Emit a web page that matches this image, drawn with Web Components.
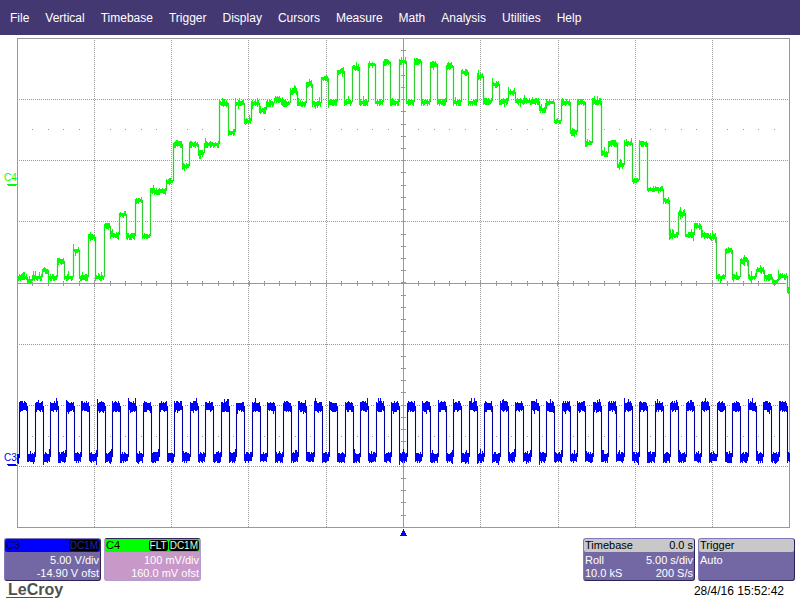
<!DOCTYPE html>
<html lang="en">
<head>
<meta charset="utf-8">
<title>LeCroy</title>
<style>
  body {
    margin: 0;
    background: #fff;
    font-family: "Liberation Sans", Arial, sans-serif;
    font-size: 11px;
  }
</style>
</head>
<body>
<scope-screen></scope-screen>

<script>
class ScopeMenu extends HTMLElement {
  constructor () {
    super()
    this.shadow = this.attachShadow({ mode: 'open' })
  }

  connectedCallback () {
    const items = this.getAttribute('items').split(',')
    this.shadow.innerHTML =
      /* html */`
      <style>
        :host {
          display: block;
          background: #443872;
        }
        nav {
          display: flex;
          gap: 16px;
          height: 35px;
          padding: 0 10px;
          align-items: center;
        }
        button {
          padding: 0;
          border: none;
          background: none;
          color: #fff;
          font: inherit;
          font-size: 12px;
          line-height: 16px;
        }
      </style>
      <nav>${items.map(item => `<button type="button">${item}</button>`).join('')}</nav>
      `
  }
}

class ScopePlot extends HTMLElement {
  constructor () {
    super()
    this.shadow = this.attachShadow({ mode: 'open' })
    this.seed = 7
  }

  connectedCallback () {
    this.render()
  }

  random () {
    this.seed = (this.seed * 16807) % 2147483647
    return this.seed / 2147483647
  }

  grid () {
    const xs = [94, 171, 248, 326, 480, 558, 635, 712]
    const ys = [99, 160, 221, 344, 405, 466]
    let dotted = ''
    let ticks = ''
    let dots = ''
    xs.forEach(x => {
      for (let y = 40; y < 527; y += 2) dotted += `M${x} ${y}h1v1h-1z`
    })
    ys.forEach(y => {
      for (let x = 19; x < 789; x += 2) dotted += `M${x} ${y}h1v1h-1z`
    })
    for (let i = 1; i < 50; i++) {
      const x = 17 + Math.round(i * 15.44)
      ticks += `M${x} 281h1v5h-1z`
      if (i % 5) dots += `M${x} 129h1v1h-1zM${x} 436h1v1h-1z`
    }
    for (let i = 1; i < 40; i++) {
      ticks += `M401 ${38 + Math.round(i * 12.22)}h5v1h-5z`
    }
    return `
      <path class="marks" d="${dotted}"/>
      <path class="marks" d="${ticks}${dots}"/>
      <path class="marks" d="M17 38h773v1h-773zM17 527h773v1h-773zM17 38h1v490h-1zM789 38h1v490h-1zM403 38h1v490h-1zM17 283h773v1h-773z"/>`
  }

  // steps: list of [x, y], each level holds until the next x
  trace (name, steps, end, half) {
    let band = ''
    let edges = ''
    steps.forEach(([x, y], i) => {
      const next = i + 1 < steps.length ? steps[i + 1][0] : end
      for (let c = x; c < next; c++) {
        const up = this.random() > 0.9 ? 3 : 0
        const down = this.random() > 0.94 ? 2 : 0
        const top = y - half - Math.floor(this.random() * 3) - up
        const bottom = y + half + 1 + Math.floor(this.random() * 3) + down
        band += `M${c} ${top}h1V${bottom}h-1z`
      }
      if (i) {
        const from = steps[i - 1][1]
        edges += `M${x} ${from}h1V${y}h-1z`
      }
    })
    return `<g class="${name}"><path class="halo" d="${edges}"/><path class="edge" d="${edges}"/><path d="${band}"/></g>`
  }

  channel4 () {
    const steps = [
      [17, 277], [27, 281], [32, 277], [42, 270], [48, 277], [57, 261], [64, 277], [73, 250],
      [79, 277], [88, 237], [95, 277], [104, 226], [110, 235], [119, 214], [126, 236], [135, 200],
      [142, 236], [150, 191], [166, 181], [173, 144], [182, 166], [189, 144], [198, 153], [204, 144],
      [219, 103], [228, 132], [235, 103], [244, 121], [251, 103], [259, 110], [266, 103], [274, 99],
      [281, 103], [290, 91], [297, 103], [306, 84], [312, 103], [321, 78], [328, 102], [337, 71],
      [344, 102], [352, 67], [359, 102], [368, 64], [375, 102], [383, 62], [390, 102], [399, 61],
      [406, 102], [414, 61], [421, 102], [430, 64], [437, 102], [446, 66], [453, 102], [461, 72],
      [468, 102], [477, 76], [483, 101], [492, 84], [499, 101], [508, 92], [515, 101], [539, 109],
      [546, 102], [554, 121], [561, 102], [570, 132], [577, 102], [585, 143], [592, 101], [601, 153],
      [608, 143], [617, 165], [624, 143], [632, 180], [639, 143], [647, 189], [663, 200], [669, 235],
      [678, 213], [685, 235], [694, 226], [701, 235], [709, 237], [716, 277], [725, 250], [732, 277],
      [740, 260], [748, 277], [756, 270], [764, 277], [772, 281], [778, 276], [787, 290]
    ]
    return this.trace('c4', steps, 790, 1)
  }

  channel3 () {
    const steps = [[17, 458]]
    for (let i = 0; i < 50; i++) {
      const x = 19 + Math.round(i * 15.5)
      steps.push([x, 406], [Math.min(x + 8, 788), 457])
    }
    return this.trace('c3', steps, 790, 3)
  }

  render () {
    this.shadow.innerHTML =
      /* html */`
      <style>
        :host { display: block; }
        svg {
          display: block;
          width: 100%;
          height: auto;
        }
        path { shape-rendering: crispEdges; }
        .marks { fill: #999; }
        .halo { fill: none; stroke-width: 2px; }
        .c4 { fill: #0f0; }
        .c4 .halo { stroke: #e0ffe0; }
        .c4 .edge { fill: #3c3; }
        .c3 { fill: #00f; }
        .c3 .halo { stroke: #f6f6ff; }
        .c3 .edge { fill: #00009c; }
        text { font-size: 10px; }
      </style>
      <svg viewBox="0 35 800 503" role="img" aria-label="Waveforms C3 and C4">
        ${this.grid()}
        ${this.channel4()}
        ${this.channel3()}
        <g fill="#0f0">
          <text x="4" y="181">C4</text>
          <path d="M7 184h10v1h-10zM8 185h8v1h-8z"/>
          <path d="M17 277h1v14h-1z"/>
        </g>
        <g fill="#00f">
          <text x="4" y="461">C3</text>
          <path d="M7 464h9v1h-9zM8 465h9v1h-9z"/>
          <path d="M403 529h1v2h1v2h1v2h1v1h-7v-1h1v-2h1v-2h1z"/>
        </g>
      </svg>
      `
  }
}

class ScopeCard extends HTMLElement {
  constructor () {
    super()
    this.shadow = this.attachShadow({ mode: 'open' })
    this.shadow.innerHTML =
      /* html */`
      <style>
        :host {
          display: block;
          box-sizing: border-box;
          width: 97px;
          border: 1px solid;
          border-color: #8478bc #2c2458 #2c2458 #8478bc;
          border-radius: 3px;
          background: #7468a4;
          color: #fff;
          line-height: 13px;
          white-space: nowrap;
        }
        :host([kind="timebase"]) { width: 112px; }
        :host([kind="c4"]) {
          border-color: #302858 #b49cd0 #b49cd0 #b49cd0;
          background: #c898c8;
        }
        header {
          display: flex;
          justify-content: space-between;
          height: 13px;
          padding: 0 1px;
          border-radius: 2px;
          background: #c8c8c8;
          color: #000;
        }
        :host([kind="c3"]) header { background: #00f; color: #000040; }
        :host([kind="c4"]) header { background: #0f0; }
        .body { padding: 2px 1px 0; }
      </style>
      <header><slot name="title"></slot><slot name="value"></slot></header>
      <div class="body"><slot></slot></div>
      `
  }
}

class ScopeBadge extends HTMLElement {
  constructor () {
    super()
    this.shadow = this.attachShadow({ mode: 'open' })
    this.shadow.innerHTML =
      /* html */`
      <style>
        :host {
          display: inline-block;
          height: 11px;
          padding: 0 1px;
          border-radius: 3px;
          background: #000;
          color: var(--badge-color, #d8ffd8);
          font-size: 10px;
          line-height: 11px;
        }
      </style>
      <slot></slot>
      `
  }
}

class ScopeScreen extends HTMLElement {
  constructor () {
    super()
    this.shadow = this.attachShadow({ mode: 'open' })
  }

  connectedCallback () {
    this.shadow.innerHTML =
      /* html */`
      <style>
        :host { display: block; }
        .cards {
          display: flex;
          gap: 3px;
          padding: 0 5px 0 4px;
        }
        .cards scope-card { height: 43px; }
        .push { margin-left: auto; }
        .row {
          display: flex;
          justify-content: space-between;
        }
        .end { justify-content: flex-end; }
        .badges {
          display: flex;
          gap: 1px;
          padding-top: 1px;
        }
        .dim { --badge-color: #2424a8; }
        footer {
          display: flex;
          justify-content: space-between;
          padding: 0 16px 0 6px;
        }
        .brand {
          height: 17px;
          padding: 0 0 0 2px;
          color: #505050;
          background: linear-gradient(#505050, #505050) 0 100% / 47px 1px no-repeat;
          font-size: 16px;
          font-weight: bold;
          line-height: 18px;
        }
        time {
          color: #000;
          font-size: 12px;
          line-height: 21px;
        }
      </style>
      <scope-menu items="File,Vertical,Timebase,Trigger,Display,Cursors,Measure,Math,Analysis,Utilities,Help"></scope-menu>
      <scope-plot></scope-plot>
      <div class="cards">
        <scope-card kind="c3">
          <span slot="title">C3</span>
          <div class="badges dim" slot="value"><scope-badge>DC1M</scope-badge></div>
          <div class="row end">5.00 V/div</div>
          <div class="row end">-14.90 V ofst</div>
        </scope-card>
        <scope-card kind="c4">
          <span slot="title">C4</span>
          <div class="badges" slot="value"><scope-badge>FLT</scope-badge><scope-badge>DC1M</scope-badge></div>
          <div class="row end">100 mV/div</div>
          <div class="row end">160.0 mV ofst</div>
        </scope-card>
        <scope-card kind="timebase" class="push">
          <span slot="title">Timebase</span>
          <span slot="value">0.0 s</span>
          <div class="row"><span>Roll</span><span>5.00 s/div</span></div>
          <div class="row"><span>10.0 kS</span><span>200 S/s</span></div>
        </scope-card>
        <scope-card kind="trigger">
          <span slot="title">Trigger</span>
          <div class="row">Auto</div>
        </scope-card>
      </div>
      <footer>
        <div class="brand">LeCroy</div>
        <time datetime="2016-04-28T15:52:42">28/4/16 15:52:42</time>
      </footer>
      `
  }
}

customElements.define('scope-menu', ScopeMenu)
customElements.define('scope-plot', ScopePlot)
customElements.define('scope-badge', ScopeBadge)
customElements.define('scope-card', ScopeCard)
customElements.define('scope-screen', ScopeScreen)
</script>
</body>
</html>
